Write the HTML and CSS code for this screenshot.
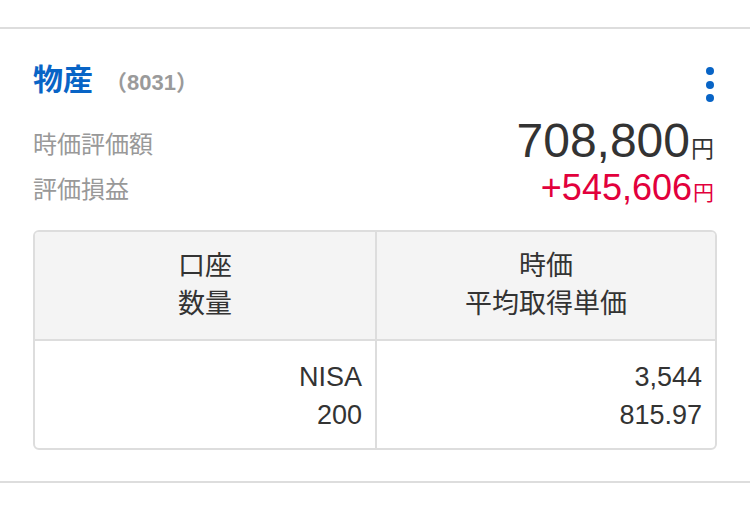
FILE: index.html
```html
<!DOCTYPE html>
<html lang="ja">
<head>
<meta charset="utf-8">
<title>物産</title>
<link rel="stylesheet" href="styles.css">
</head>
<body>
<div class="page">
  <section class="card">
    <div class="card-head">
      <h2 class="title">物産<span class="code">（8031）</span></h2>
      <button class="more" type="button" aria-label="メニュー"><span></span><span></span><span></span></button>
    </div>
    <div class="row row-value">
      <span class="label">時価評価額</span>
      <span class="amount">708,800<span class="yen">円</span></span>
    </div>
    <div class="row row-gain">
      <span class="label">評価損益</span>
      <span class="gain">+545,606<span class="yen yen-sm">円</span></span>
    </div>
    <div class="table">
      <div class="cell th">口座<br>数量</div>
      <div class="cell th">時価<br>平均取得単価</div>
      <div class="cell td">NISA<br>200</div>
      <div class="cell td">3,544<br>815.97</div>
    </div>
  </section>
</div>
</body>
</html>
```

FILE: styles.css
```css
* { box-sizing: border-box; margin: 0; padding: 0; }
html, body { background: #fff; }
body {
  font-family: "Liberation Sans", "Noto Sans CJK JP", sans-serif;
  color: #333;
}
.page { padding-top: 27px; }
.card {
  border-top: 2px solid #dddddd;
  border-bottom: 2px solid #dddddd;
  padding: 34px 33px 31px;
}
.card-head {
  display: flex;
  justify-content: space-between;
  align-items: flex-start;
  height: 34px;
}
.title {
  font-size: 30px;
  line-height: 34px;
  font-weight: bold;
  color: #0864c6;
}
.code {
  font-size: 22px;
  color: #9a9a9a;
  font-weight: bold;
  margin-left: 12px;
}
.more {
  display: flex;
  flex-direction: column;
  gap: 5.5px;
  border: none;
  background: none;
  margin-top: 4px;
  margin-right: 3px;
  cursor: pointer;
}
.more span {
  display: block;
  width: 8px;
  height: 8px;
  border-radius: 50%;
  background: #0864c6;
}
.row {
  display: flex;
  justify-content: space-between;
  align-items: center;
  padding-right: 3px;
}
.row-value { height: 50px; margin-top: 23px; }
.row-gain { height: 40px; }
.label {
  font-size: 24px;
  line-height: 30px;
  color: #999;
}
.amount {
  font-size: 48px;
  line-height: 50px;
  color: #333;
}
.gain {
  font-size: 36px;
  line-height: 40px;
  color: #e2003c;
}
.yen {
  font-size: 23px;
  margin-left: 1px;
}
.yen-sm { font-size: 21px; }
.table {
  margin-top: 20px;
  border: 2px solid #dddddd;
  border-radius: 6px;
  overflow: hidden;
  display: grid;
  grid-template-columns: 1fr 1fr;
  font-size: 27px;
  line-height: 38px;
  color: #333;
}
.cell:nth-child(even) { border-left: 2px solid #dddddd; }
.th {
  background: #f4f4f4;
  text-align: center;
  padding: 15px 0 16px;
  border-bottom: 2px solid #dddddd;
}
.td {
  text-align: right;
  padding: 17px 13px 14px;
}
```
